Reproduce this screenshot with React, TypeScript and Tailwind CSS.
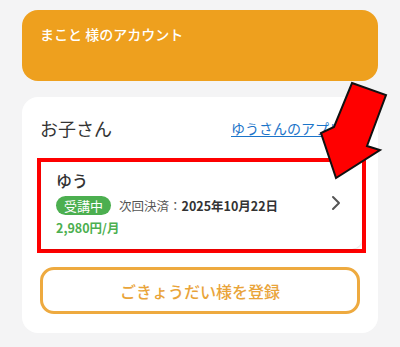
import React from 'react';

const font = { fontFamily: '"Noto Sans CJK JP", "Noto Sans", sans-serif' };

const ChevronRight: React.FC = () => (
  <svg width="10" height="16" viewBox="0 0 10 16" fill="none" className="text-[#555]">
    <path d="M2 2l6 6-6 6" stroke="currentColor" strokeWidth="2" strokeLinecap="round" strokeLinejoin="round" />
  </svg>
);

// red annotation arrow laid over the page
const PointerArrow: React.FC = () => (
  <svg className="absolute left-0 top-0 pointer-events-none" width="400" height="347" viewBox="0 0 400 347">
    <polygon
      points="352,83 386,95 367,146 380,150 336,178 321,133 334,127"
      fill="#ff0000"
      stroke="#111"
      strokeWidth="2"
      strokeLinejoin="miter"
    />
  </svg>
);

export default function App() {
  return (
    <div className="relative w-[400px] h-[347px] overflow-hidden bg-[#f4f4f5]" style={font}>
      <div className="px-[22px] pt-[10px]">
        <div className="h-[71px] rounded-[16px] bg-[#eea01e] px-[18px] pt-[14px]">
          <p className="text-[14px] leading-[20px] font-medium text-white">まこと 様のアカウント</p>
        </div>

        <div className="mt-[16px] h-[236px] rounded-[16px] bg-white px-[18px] pt-[18px]">
          <div className="flex items-center justify-between h-[26px]">
            <h2 className="text-[18px] leading-[26px] text-[#333]">お子さん</h2>
            <a className="mr-[3px] text-[14px] leading-[20px] text-[#1b74c9] underline underline-offset-2 whitespace-nowrap">
              ゆうさんのアプリへ
            </a>
          </div>

          <div className="mt-[17px] -ml-[3px] -mr-[6px] border-4 border-[#ff0000]">
            <div className="flex items-center rounded-br-[10px] bg-white shadow-sm pl-[15px] pr-[21px] pt-[8px] pb-[13px]">
              <div className="flex-1">
                <p className="text-[16px] leading-[20px] font-medium text-[#333]">ゆう</p>
                <div className="mt-[6px] flex items-center gap-[8px]">
                  <span className="flex items-center h-[19px] px-[8px] rounded-full bg-[#4caf50] text-[13px] leading-none text-white">
                    受講中
                  </span>
                  <span className="text-[12.5px] leading-[18px] text-[#555]">
                    次回決済：<span className="font-bold text-[#333]">2025年10月22日</span>
                  </span>
                </div>
                <p className="mt-[5px] text-[12.5px] leading-[16px] font-bold text-[#4caf50]">2,980円/月</p>
              </div>
              <ChevronRight />
            </div>
          </div>

          <button className="mt-[14px] w-full h-[47px] rounded-[14px] border-[3px] border-[#eeaa3f] bg-white text-[16px] font-medium text-[#e9a43a]">
            ごきょうだい様を登録
          </button>
        </div>
      </div>
      <PointerArrow />
    </div>
  );
}
